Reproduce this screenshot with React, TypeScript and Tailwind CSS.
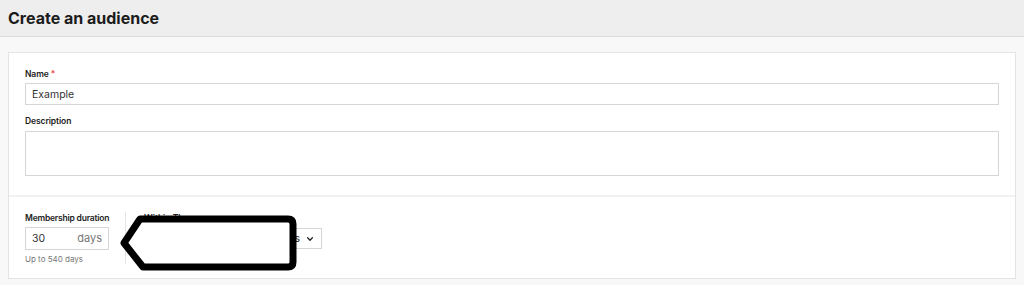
import React from 'react';

// Petite flèche de masquage posée par-dessus le champ "Within"
const RedactArrow: React.FC = () => (
  <svg
    className="pointer-events-none absolute left-[116px] top-[212px]"
    width="184"
    height="62"
    viewBox="0 0 184 62"
  >
    <path
      d="M24 7 L172 7 Q177 7 177 12 L177 50 Q177 55 172 55 L27 55 L8 31 Z"
      fill="#ffffff"
      stroke="#000000"
      strokeWidth="7"
      strokeLinejoin="round"
    />
  </svg>
);

const App: React.FC = () => {
  return (
    <div
      className="relative min-h-screen bg-[#f8f8f8] text-[#222]"
      style={{ fontFamily: 'Inter, "Liberation Sans", sans-serif' }}
    >
      <header className="flex h-[37px] items-center border-b border-[#dcdcdc] bg-[#eeeeee] px-2">
        <h1 className="text-[16px] leading-[20px] font-bold text-[#1c1c1c]">Create an audience</h1>
      </header>

      <main className="px-2 pt-[15px]">
        <div className="border border-[#e4e4e4] bg-white">
          <div className="px-4 pt-[15px] pb-[19px]">
            <label className="block text-[8.5px] leading-[12px] font-semibold tracking-[-0.1px] text-[#222]">
              Name <span className="text-[#e5484d]">*</span>
            </label>
            <input
              defaultValue="Example"
              className="mt-[3px] block h-[22px] w-full border border-[#d6d6d6] px-[6px] text-[10.5px] text-[#333] outline-none"
            />
            <label className="mt-[10px] block text-[8.5px] leading-[12px] font-semibold tracking-[-0.1px] text-[#222]">
              Description
            </label>
            <textarea className="mt-[4px] block h-[45px] w-full resize-none border border-[#d6d6d6] outline-none" />
          </div>

          <div className="flex border-t-2 border-[#f1f1f1] px-4 pt-[15px] pb-[14px]">
            <div className="w-[84px] pr-0">
              <label className="block whitespace-nowrap text-[8.5px] leading-[12px] font-semibold tracking-[-0.2px] text-[#222]">
                Membership duration
              </label>
              <div className="mt-[3px] flex h-[23px] w-[84px] items-center justify-between border border-[#d6d6d6] px-[6px]">
                <span className="text-[10.5px] text-[#333]">30</span>
                <span className="text-[11px] text-[#777]">days</span>
              </div>
              <p className="mt-[4px] whitespace-nowrap text-[8px] leading-[10px] text-[#777]">Up to 540 days</p>
            </div>
            <div className="ml-4 w-px bg-[#e4e4e4]" />
            <div className="pl-[18px]">
              <label className="block text-[8.5px] leading-[12px] font-semibold text-[#222]">Within The</label>
              <div className="mt-[4px] flex items-center gap-2">
                <div className="flex h-[21px] w-[84px] items-center border border-[#d6d6d6] px-[6px] text-[10.5px]">
                  7
                </div>
                <div className="flex h-[21px] w-[86px] items-center justify-end gap-[6px] border border-[#d6d6d6] px-[7px] text-[10.5px]">
                  <span>Days</span>
                  <svg width="8" height="8" viewBox="0 0 10 10" fill="none">
                    <path d="M2 3.5 L5 6.5 L8 3.5" stroke="#222" strokeWidth="1.6" strokeLinecap="round" strokeLinejoin="round" />
                  </svg>
                </div>
              </div>
            </div>
          </div>
        </div>
      </main>

      <RedactArrow />
    </div>
  );
};

export default App;
